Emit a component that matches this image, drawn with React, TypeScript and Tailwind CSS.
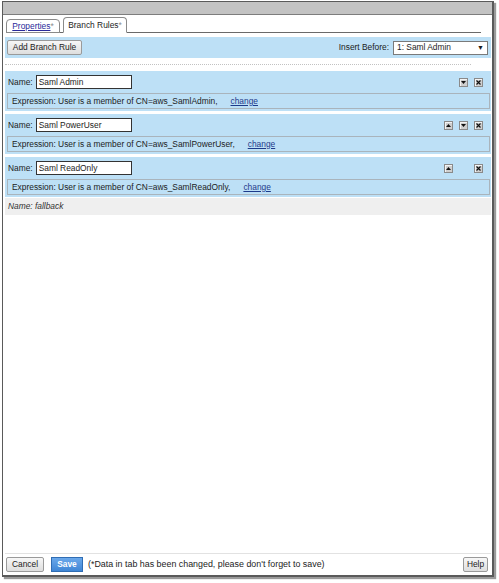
import React from "react";

type Rule = {
  name: string;
  cn: string;
  up: boolean;
  down: boolean;
};

const rules: Rule[] = [
  { name: "Saml Admin", cn: "aws_SamlAdmin", up: false, down: true },
  { name: "Saml PowerUser", cn: "aws_SamlPowerUser", up: true, down: true },
  { name: "Saml ReadOnly", cn: "aws_SamlReadOnly", up: true, down: false },
];

function IconButton({ glyph, show }: { glyph: "up" | "down" | "x"; show: boolean }) {
  if (!show) return <span className="w-[9px] h-[9px]" />;
  return (
    <span className="w-[9px] h-[9px] flex items-center justify-center bg-[#cfcfcf] border border-[#8a8a8a] shadow-[inset_1px_1px_0_#f4f4f4]">
      {glyph === "up" && (
        <svg width="5" height="3" viewBox="0 0 5 3">
          <path d="M0 3 L2.5 0 L5 3 Z" fill="#111" />
        </svg>
      )}
      {glyph === "down" && (
        <svg width="5" height="3" viewBox="0 0 5 3">
          <path d="M0 0 L5 0 L2.5 3 Z" fill="#111" />
        </svg>
      )}
      {glyph === "x" && (
        <svg width="5" height="5" viewBox="0 0 5 5">
          <path d="M0.5 0.5 L4.5 4.5 M4.5 0.5 L0.5 4.5" stroke="#111" strokeWidth="1.2" />
        </svg>
      )}
    </span>
  );
}

function RuleBlock({ rule }: { rule: Rule }) {
  return (
    <div className="bg-[#bde0f6] pb-[2px]">
      <div className="h-[22px] flex items-center pl-[3px] pr-[8px]">
        <span>Name:</span>
        <div className="ml-[3px] w-[96px] h-[14px] bg-white border border-[#333] flex items-center pl-[2px] leading-none">
          {rule.name}
        </div>
        <div className="ml-auto flex items-center gap-[6px]">
          <IconButton glyph="up" show={rule.up} />
          <IconButton glyph="down" show={rule.down} />
          <IconButton glyph="x" show={true} />
        </div>
      </div>
      <div className="ml-[2px] mr-[1px] h-[16px] border border-[#a9b4bc] flex items-center pl-[4px]">
        <span>Expression: User is a member of CN={rule.cn},</span>
        <a className="ml-[13px] text-[#1d3a8a] underline cursor-pointer">change</a>
      </div>
    </div>
  );
}

export default function App() {
  return (
    <div className="w-[499px] h-[583px] bg-white pt-[1px] pl-[2px] font-['Liberation_Sans',Arial,sans-serif] text-[8.4px] text-[#1c1c1c]">
      <div className="w-[492px] h-[576px] border border-[#5a5a5a] border-r-2 border-b-2 shadow-[2px_2px_1px_#9a9a9a] flex flex-col">
        <div className="h-[13px] bg-[#c3c3c3] border-b border-[#7d7d7d]" />

        <div className="flex-1 flex flex-col pl-[2px] pr-[1px]">
          <div className="mt-[3px] ml-[1px] mr-[10px] flex items-end gap-[3px] border-b border-[#6a6a6a] h-[15px]">
            <div className="w-[54px] h-[14px] -mb-px bg-white border border-[#8a8a8a] rounded-t-[4px] flex items-center justify-center">
              <span className="text-[#2a2a9a] underline">Properties</span>
              <span className="text-[#888]">*</span>
            </div>
            <div className="w-[64px] h-[16px] -mb-px bg-white border border-[#8a8a8a] border-b-white rounded-t-[4px] flex items-center justify-center">
              <span>Branch Rules</span>
              <span className="text-[#888]">*</span>
            </div>
          </div>

          <div className="mt-[4px] h-[21px] bg-[#bde0f6] flex items-center pl-[2px] pr-[3px]">
            <button className="h-[15px] w-[75px] border border-[#9a9a9a] rounded-[2px] bg-gradient-to-b from-[#f7f7f7] to-[#dedede] leading-none text-[#222]">
              Add Branch Rule
            </button>
            <span className="ml-auto mr-[4px]">Insert Before:</span>
            <div className="w-[95px] h-[14px] bg-white border border-[#7a7a7a] flex items-center pl-[3px] pr-[3px] leading-none">
              <span>1: Saml Admin</span>
              <span className="ml-auto text-[7px]">▼</span>
            </div>
          </div>

          <div className="mt-[6px] mr-[20px] border-t border-dotted border-[#c2c2c2]" />

          <div className="mt-[6px] flex flex-col gap-[3px]">
            {rules.map((r) => (
              <RuleBlock key={r.name} rule={r} />
            ))}
          </div>

          <div className="mt-[1px] h-[17px] bg-[#efefef] flex items-center pl-[3px] italic text-[#333]">
            Name: fallback
          </div>

          <div className="flex-1" />

          <div className="border-t border-[#e2e2e2] h-[22px] flex items-center pl-[1px] pr-[3px]">
            <button className="h-[15px] w-[38px] border border-[#9a9a9a] rounded-[2px] bg-gradient-to-b from-[#f7f7f7] to-[#dedede] leading-none text-[#222]">
              Cancel
            </button>
            <button className="ml-[7px] h-[15px] w-[32px] border border-[#2f6db4] bg-gradient-to-b from-[#6aa8ea] to-[#3f86d6] leading-none text-white font-bold">
              Save
            </button>
            <span className="ml-[5px] text-[8.9px]">(*Data in tab has been changed, please don't forget to save)</span>
            <button className="ml-auto h-[15px] w-[25px] border border-[#9a9a9a] rounded-[2px] bg-gradient-to-b from-[#f7f7f7] to-[#dedede] leading-none text-[#222]">
              Help
            </button>
          </div>
        </div>
      </div>
    </div>
  );
}
